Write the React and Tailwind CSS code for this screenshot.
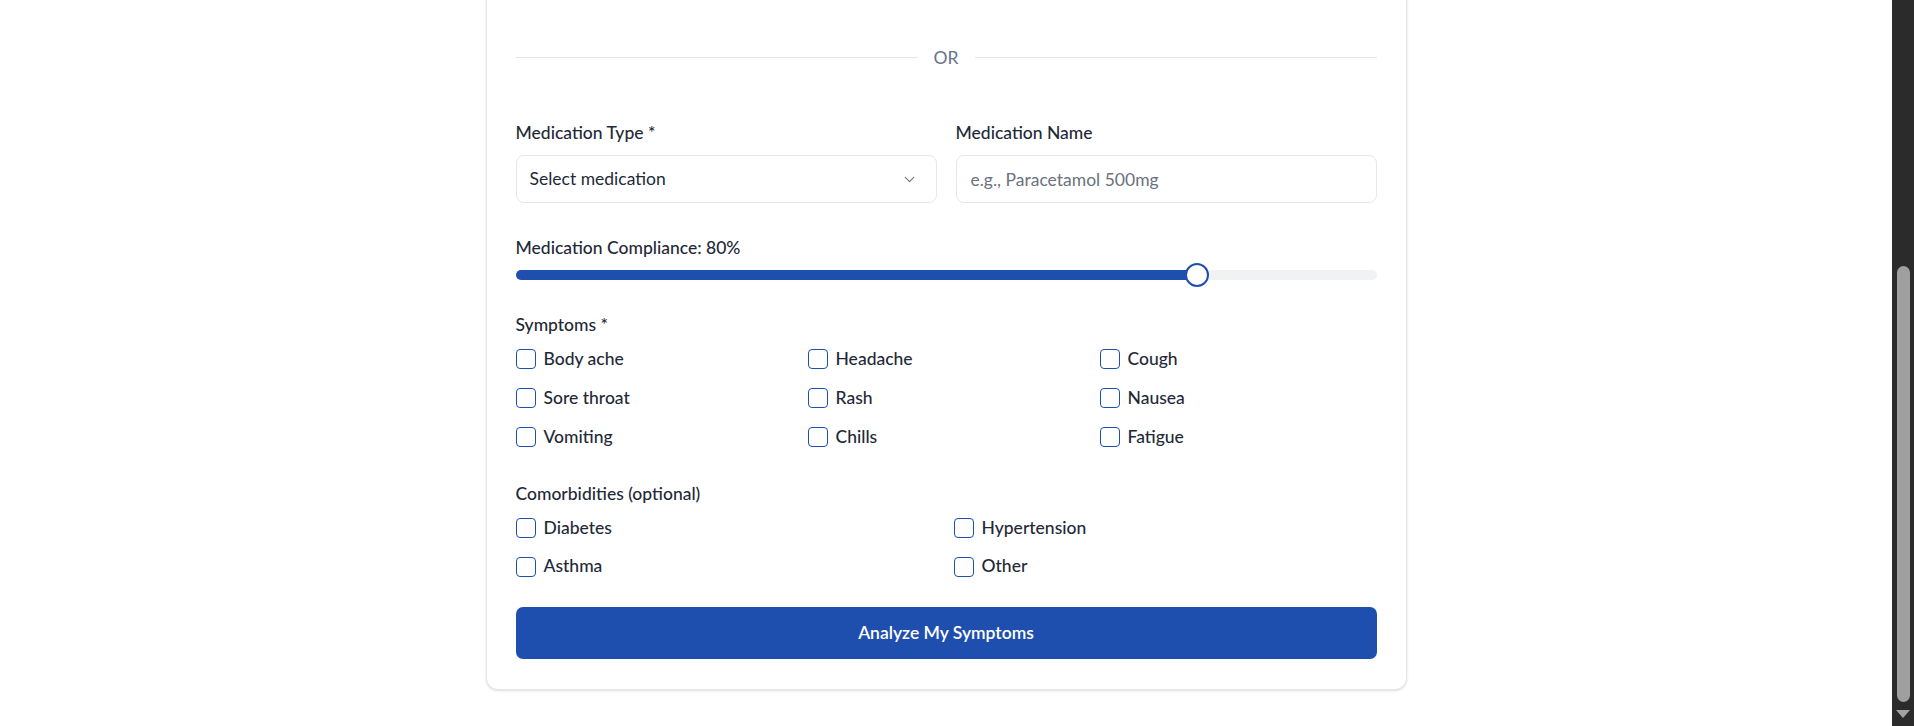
import { ChevronDown } from "lucide-react";

const symptoms = [
  "Body ache",
  "Headache",
  "Cough",
  "Sore throat",
  "Rash",
  "Nausea",
  "Vomiting",
  "Chills",
  "Fatigue",
];

const comorbidities = ["Diabetes", "Hypertension", "Asthma", "Other"];

function Check({ label }) {
  return (
    <label className="flex items-center gap-2 h-[25px] cursor-pointer">
      <span className="w-5 h-5 shrink-0 rounded-[4px] border-[1.5px] border-[#1f4fae] bg-white" />
      <span className="text-[17.5px] font-medium text-[#1f2937]">{label}</span>
    </label>
  );
}

export default function App() {
  return (
    <div className="h-screen w-full flex overflow-hidden bg-white font-['Lato',sans-serif]">
      {/* page */}
      <main className="flex-1 flex justify-center overflow-hidden">
        <div className="w-[921px] h-fit -mt-5 bg-white border border-[#e5e7eb] rounded-xl shadow-sm px-[29px] pt-16 pb-[30px]">
          {/* OR divider */}
          <div className="flex items-center gap-4">
            <div className="flex-1 h-px bg-[#e5e7eb]" />
            <span className="text-[17.5px] leading-[25px] text-[#64748b]">OR</span>
            <div className="flex-1 h-px bg-[#e5e7eb]" />
          </div>

          {/* medication */}
          <div className="grid grid-cols-2 gap-x-[19px] mt-[50px]">
            <div>
              <div className="text-[17.5px] leading-[25px] font-medium text-[#1f2937] mb-2.5">
                Medication Type *
              </div>
              <button className="w-full h-12 rounded-lg border border-[#e5e7eb] bg-white flex items-center justify-between pl-[13px] pr-[18px]">
                <span className="text-[17.5px] text-[#1f2937]">Select medication</span>
                <ChevronDown className="w-[17px] h-[17px] text-[#6b7280]" strokeWidth={1.5} />
              </button>
            </div>
            <div>
              <div className="text-[17.5px] leading-[25px] font-medium text-[#1f2937] mb-2.5">
                Medication Name
              </div>
              <input
                placeholder="e.g., Paracetamol 500mg"
                className="w-full h-12 rounded-lg border border-[#e5e7eb] bg-white px-[14px] text-[17.5px] text-[#1f2937] placeholder:text-[#6b7280] outline-none"
              />
            </div>
          </div>

          {/* compliance slider */}
          <div className="mt-[32px]">
            <div className="text-[17.5px] leading-[25px] font-medium text-[#1f2937]">
              Medication Compliance: 80%
            </div>
            <div className="relative mt-[9.5px] h-2.5 rounded-full bg-[#f1f2f4]">
              <div className="h-2.5 w-[79.2%] rounded-full bg-[#1f4fae]" />
              <span className="absolute top-1/2 left-[79.2%] -translate-x-1/2 -translate-y-1/2 w-6 h-6 rounded-full bg-white border-[2.5px] border-[#1f4fae]" />
            </div>
          </div>

          {/* symptoms */}
          <div className="mt-[32px]">
            <div className="text-[17.5px] leading-[25px] font-medium text-[#1f2937] mb-[10px]">
              Symptoms *
            </div>
            <div className="grid grid-cols-3 gap-x-[15px] gap-y-[14px]">
              {symptoms.map((s) => (
                <Check key={s} label={s} />
              ))}
            </div>
          </div>

          {/* comorbidities */}
          <div className="mt-[31px]">
            <div className="text-[17.5px] leading-[25px] font-medium text-[#1f2937] mb-[10px]">
              Comorbidities (optional)
            </div>
            <div className="grid grid-cols-2 gap-x-[15px] gap-y-[13.5px]">
              {comorbidities.map((c) => (
                <Check key={c} label={c} />
              ))}
            </div>
          </div>

          <button className="mt-[28px] w-full h-[52px] rounded-[7px] bg-[#1f4fae] text-white text-[17.5px] font-semibold">
            Analyze My Symptoms
          </button>
        </div>
      </main>

      {/* scrollbar */}
      <div className="w-[22px] shrink-0 bg-[#2b2b2b] flex flex-col items-center">
        <div className="h-[266px]" />
        <div className="w-[13px] h-[436px] rounded-full bg-[#9f9f9f]" />
        <div className="flex-1 flex items-center justify-center">
          <div className="w-0 h-0 border-l-[7px] border-r-[7px] border-t-[8px] border-l-transparent border-r-transparent border-t-[#a3a3a3]" />
        </div>
      </div>
    </div>
  );
}
